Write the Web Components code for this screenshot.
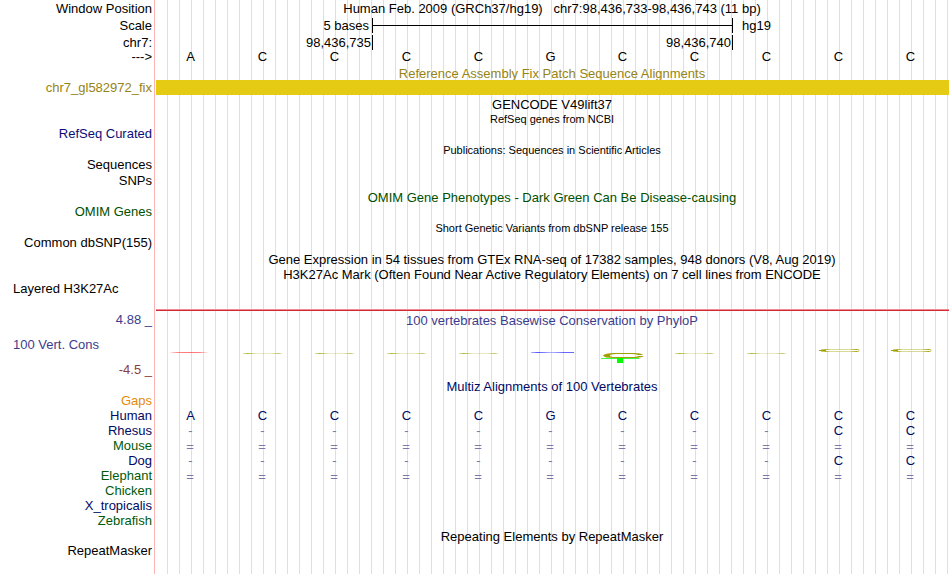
<!DOCTYPE html>
<html lang="en">
<head>
<meta charset="utf-8">
<title>Human chr7:98,436,733-98,436,743</title>
<style>
  body {
    margin: 0;
    background: #ffffff;
    color: #000000;
    font: 13px/15px "Liberation Sans", Arial, Helvetica, sans-serif;
  }
</style>
</head>
<body>
<genome-browser>
  <track-row size="header"><span slot="label">Window Position</span><track-title>Human Feb. 2009 (GRCh37/hg19) &nbsp; chr7:98,436,733-98,436,743 (11 bp)</track-title></track-row>
  <track-row size="header"><span slot="label">Scale</span><scale-ruler before="5 bases" after="hg19" bar></scale-ruler></track-row>
  <track-row size="header"><span slot="label">chr7:</span><scale-ruler before="98,436,735" inside="98,436,740"></scale-ruler></track-row>
  <track-row size="bases"><span slot="label">---&gt;</span><base-row bases="ACCCCGCCCCC"></base-row></track-row>

  <track-row size="short" tone="patch"><track-title tight>Reference Assembly Fix Patch Sequence Alignments</track-title></track-row>
  <track-row tone="patch"><span slot="label">chr7_gl582972_fix</span><alignment-bar></alignment-bar></track-row>

  <track-row size="tall"><track-title>GENCODE V49lift37</track-title></track-row>
  <track-row size="short"><track-title small>RefSeq genes from NCBI</track-title></track-row>
  <track-row tone="refseq"><span slot="label">RefSeq Curated</span></track-row>
  <track-row size="medium"><track-title small>Publications: Sequences in Scientific Articles</track-title></track-row>
  <track-row><span slot="label">Sequences</span></track-row>
  <track-row size="medium"><span slot="label">SNPs</span></track-row>
  <track-row size="tall" tone="omim"><track-title>OMIM Gene Phenotypes - Dark Green Can Be Disease-causing</track-title></track-row>
  <track-row size="short" tone="omim"><span slot="label">OMIM Genes</span></track-row>
  <track-row size="medium"><track-title small>Short Genetic Variants from dbSNP release 155</track-title></track-row>
  <track-row><span slot="label">Common dbSNP(155)</span></track-row>
  <track-row size="tall"><track-title>Gene Expression in 54 tissues from GTEx RNA-seq of 17382 samples, 948 donors (V8, Aug 2019)</track-title></track-row>
  <track-row><track-title>H3K27Ac Mark (Often Found Near Active Regulatory Elements) on 7 cell lines from ENCODE</track-title></track-row>
  <track-row size="short" align="start"><span slot="label">Layered H3K27Ac</span></track-row>

  <track-row size="graph">
    <graph-axis slot="label" max="4.88 _" name="100 Vert. Cons" min="-4.5 _"></graph-axis>
    <conservation-graph heading="100 vertebrates Basewise Conservation by PhyloP" marks="a c c c c g low c c high high"></conservation-graph>
  </track-row>

  <track-row tone="multiz"><track-title>Multiz Alignments of 100 Vertebrates</track-title></track-row>
  <track-row size="short" tone="gaps"><span slot="label">Gaps</span></track-row>
  <track-row tone="multiz"><span slot="label">Human</span><base-row bases="ACCCCGCCCCC"></base-row></track-row>
  <track-row tone="multiz"><span slot="label">Rhesus</span><base-row bases="---------CC"></base-row></track-row>
  <track-row tone="species"><span slot="label">Mouse</span><base-row bases="==========="></base-row></track-row>
  <track-row tone="multiz"><span slot="label">Dog</span><base-row bases="---------CC"></base-row></track-row>
  <track-row tone="species"><span slot="label">Elephant</span><base-row bases="==========="></base-row></track-row>
  <track-row tone="species"><span slot="label">Chicken</span></track-row>
  <track-row tone="multiz"><span slot="label">X_tropicalis</span></track-row>
  <track-row tone="species"><span slot="label">Zebrafish</span></track-row>
  <track-row size="medium"><track-title>Repeating Elements by RepeatMasker</track-title></track-row>
  <track-row size="short"><span slot="label">RepeatMasker</span></track-row>
  <track-row size="rest"></track-row>
</genome-browser>

<script>
function define(name, markup, setup) {
  const template = document.createElement('template');
  template.innerHTML = markup;

  customElements.define(name, class extends HTMLElement {
    constructor() {
      super();
      this.attachShadow({ mode: 'open' });
      this.shadowRoot.appendChild(template.content.cloneNode(true));
    }

    connectedCallback() {
      if (setup && !this.ready) {
        this.ready = true;
        setup(this, this.shadowRoot);
      }
    }
  });
}

define('genome-browser', `
  <style>
    :host {
      display: flex;
      flex-direction: column;
      min-height: 100vh;
    }
  </style>
  <slot></slot>
`);

// Label column on the left, guide lines and track content on the right.
define('track-row', `
  <style>
    :host {
      --row-height: 15px;
      display: grid;
      grid-template-columns: 154px minmax(0, 1fr);
      min-height: var(--row-height);
      white-space: nowrap;
    }
    :host([size="short"]) { --row-height: 14px; }
    :host([size="medium"]) { --row-height: 16px; }
    :host([size="tall"]) { --row-height: 17px; }
    :host([size="header"]) { --row-height: 17px; line-height: 17px; }
    :host([size="bases"]) { line-height: 11px; }
    :host([size="short"]) { line-height: 14px; }
    :host([size="graph"]) { --row-height: 83px; }
    :host([size="rest"]) { flex: 1; }
    :host([tone="patch"]) { color: #968414; }
    :host([tone="refseq"]) { color: #0c0c78; }
    :host([tone="omim"]) { color: #005000; }
    :host([tone="multiz"]) { color: #000a64; }
    :host([tone="species"]) { color: #005a0a; }
    :host([tone="gaps"]) { color: #e68a0a; }

    .label,
    .track {
      display: flex;
      align-items: flex-end;
      min-width: 0;
    }
    .label {
      justify-content: flex-end;
      padding-right: 2px;
    }
    :host([align="start"]) .label {
      justify-content: flex-start;
      padding-left: 13px;
    }
    :host([size="bases"]) .label,
    :host([size="bases"]) .track {
      align-items: flex-start;
    }
    :host([size="graph"]) .label,
    :host([size="graph"]) .track {
      align-items: stretch;
    }
    :host([size="graph"]) .label { padding: 0; }
    .track {
      border-left: 1px solid #ffb4b4;
      background:
        linear-gradient(#ffffff, #ffffff) 0 0 / 1px 100% no-repeat,
        linear-gradient(to right, #dcdcf5 1px, transparent 1px) 0 0 / 12px 100% repeat-x;
    }
  </style>
  <div class="label"><slot name="label"></slot></div>
  <div class="track"><slot></slot></div>
`);

define('track-title', `
  <style>
    :host {
      display: block;
      flex: 1;
      padding-right: 1px;
      text-align: center;
    }
    :host([small]) { font-size: 11px; line-height: 13px; }
    :host([tight]) { line-height: 12px; }
  </style>
  <slot></slot>
`);

define('alignment-bar', `
  <style>
    :host {
      display: block;
      flex: 1;
      align-self: stretch;
      margin: 0 1px;
      background: #e6cb14;
    }
  </style>
`);

define('scale-ruler', `
  <style>
    :host {
      display: grid;
      flex: 1;
      grid-template-columns: 3fr 5fr 3fr;
      padding: 0 2px 0 1px;
      line-height: 16px;
    }
    div { min-width: 0; }
    .before {
      padding-right: 3px;
      text-align: right;
    }
    .inside {
      display: flex;
      flex-direction: column;
      height: 15px;
      padding-right: 1px;
      border-left: 1px solid #000000;
      text-align: right;
    }
    :host(:not([bar])) .before { padding-right: 1px; }
    :host([bar]) .inside { padding: 0; }
    :host([bar]) .inside::before {
      content: "";
      margin-top: 7px;
      border-top: 1px solid #000000;
    }
    .after {
      height: 15px;
      padding-left: 9px;
      border-left: 1px solid #000000;
    }
  </style>
  <div class="before"></div>
  <div class="inside"></div>
  <div class="after"></div>
`, (host, root) => {
  for (const part of ['before', 'inside', 'after']) {
    root.querySelector('.' + part).textContent = host.getAttribute(part) || '';
  }
});

// One cell per base; gaps and unaligned bases are drawn lighter.
define('base-row', `
  <style>
    :host {
      display: grid;
      flex: 1;
      grid-template-columns: repeat(11, minmax(0, 1fr));
      padding-right: 3px;
      text-align: center;
    }
    span { padding-right: 1px; }
    .gap { color: #7878aa; }
    .unaligned {
      height: 15px;
      padding-right: 2px;
      color: #7878aa;
      line-height: 17px;
    }
  </style>
`, (host, root) => {
  const kinds = { '-': 'gap', '=': 'unaligned' };
  for (const base of host.getAttribute('bases')) {
    const cell = document.createElement('span');
    cell.className = kinds[base] || 'base';
    cell.textContent = base;
    root.appendChild(cell);
  }
});

define('graph-axis', `
  <style>
    :host {
      display: flex;
      flex: 1;
      flex-direction: column;
      gap: 10px;
      padding: 16px 2px 0 13px;
      color: #3c3c8c;
    }
    .max, .min { text-align: right; }
    .min { color: #8c3c3c; }
  </style>
  <div class="max"></div>
  <div class="name"></div>
  <div class="min"></div>
`, (host, root) => {
  for (const part of ['max', 'name', 'min']) {
    root.querySelector('.' + part).textContent = host.getAttribute(part);
  }
});

// Base letters squashed to the height of their score.
const fade = (id, stops) => `
  <linearGradient id="${id}" gradientUnits="userSpaceOnUse" x1="14" x2="58" y1="0" y2="0">${stops}</linearGradient>`;

const marks = {
  a: fade('f', '<stop stop-color="#ff4040" stop-opacity="0"/><stop offset=".2" stop-color="#ff5050" stop-opacity=".7"/><stop offset=".5" stop-color="#ff5050" stop-opacity=".8"/><stop offset=".7" stop-color="#ff5050" stop-opacity=".7"/><stop offset=".9" stop-color="#ff4040" stop-opacity="0"/>') +
    '<path fill="url(#f)" d="M14 24h40v1H14z"/>',
  c: fade('f', '<stop offset=".05" stop-color="#a0a000" stop-opacity=".3"/><stop offset=".15" stop-color="#a0a000" stop-opacity=".8"/><stop offset=".35" stop-color="#a0a000" stop-opacity=".2"/><stop offset=".7" stop-color="#a0a000" stop-opacity=".25"/><stop offset=".85" stop-color="#a0a000" stop-opacity=".6"/><stop offset=".96" stop-color="#a0a000" stop-opacity="0"/>') +
    '<path fill="url(#f)" d="M16 25h40v1H16z"/>',
  g: fade('f', '<stop offset=".05" stop-color="#4040ff" stop-opacity=".4"/><stop offset=".2" stop-color="#4040ff" stop-opacity=".9"/><stop offset=".5" stop-color="#4040ff" stop-opacity=".4"/><stop offset=".8" stop-color="#4040ff" stop-opacity=".8"/><stop offset="1" stop-color="#4040ff" stop-opacity=".8"/>') +
    '<path fill="url(#f)" d="M16 24h43v1H16z"/>',
  low: `
    <path fill="#a0a000" fill-rule="evenodd" d="M16 27.500Q18 25 27 25H46Q55 25 56 27L51 27Q49 26 44 26H29Q23 26 23 27.500Q23 29 29 29H44Q50 29 51 28L57 28Q54 30 45 30H27Q17 30 16 27.500z"/>
    <path fill="#40ff40" d="M14 30h38v1H14z"/>
    <path fill="#00ff00" d="M30 30h6v5h-6z"/>`,
  high: fade('f', '<stop offset=".08" stop-color="#a0a000" stop-opacity=".4"/><stop offset=".2" stop-color="#a0a000" stop-opacity=".8"/><stop offset=".3" stop-color="#a0a000" stop-opacity=".4"/><stop offset=".75" stop-color="#a0a000" stop-opacity=".4"/><stop offset=".9" stop-color="#a0a000" stop-opacity=".9"/><stop offset="1" stop-color="#a0a000" stop-opacity="0"/>') +
    `<path fill="#ffffff" d="M22 22h33v1H22z"/>
    <path fill="url(#f)" d="M18 21h38v1H18zM18 23h38v1H18z"/>
    <path fill="#a0a000" d="M16 22h7v1h-7z"/>
    <path fill="#a0a000" fill-opacity=".3" d="M55 22h2v1h-2z"/>`
};

define('base-mark', `
  <style>
    :host { display: block; }
    svg { display: block; overflow: visible; }
  </style>
  <svg width="72" height="40" viewBox="0 0 72 40" aria-hidden="true"></svg>
`, (host, root) => {
  root.querySelector('svg').innerHTML = marks[host.getAttribute('kind')];
});

define('conservation-graph', `
  <style>
    :host {
      display: block;
      flex: 1;
      padding-top: 13px;
      color: #3c3c8c;
    }
    .limit {
      height: 1px;
      margin: 0 1px;
      border-top: 1px solid #f08c96;
      background: #d22832;
    }
    .heading {
      height: 17px;
      line-height: 19px;
    }
    .marks {
      display: grid;
      grid-template-columns: repeat(11, minmax(0, 1fr));
      padding-right: 3px;
    }
  </style>
  <div class="limit"></div>
  <track-title class="heading"></track-title>
  <div class="marks"></div>
`, (host, root) => {
  root.querySelector('.heading').textContent = host.getAttribute('heading');
  for (const kind of host.getAttribute('marks').split(' ')) {
    const mark = document.createElement('base-mark');
    mark.setAttribute('kind', kind);
    root.querySelector('.marks').appendChild(mark);
  }
});
</script>
</body>
</html>
